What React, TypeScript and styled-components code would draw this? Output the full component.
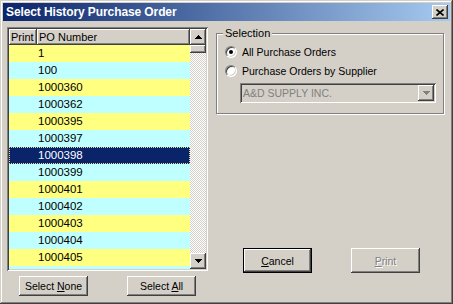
import React from "react";
import styled, { createGlobalStyle } from "styled-components";

const Global = createGlobalStyle`
  html, body { margin: 0; padding: 0; background: #d4d0c8; }
  body { font-family: "Liberation Sans", Arial, sans-serif; font-size: 11px; color: #000; }
`;

const raised = `
  box-shadow: inset -1px -1px 0 #404040, inset 1px 1px 0 #ffffff,
    inset -2px -2px 0 #808080, inset 2px 2px 0 #d4d0c8;
`;

const Window = styled.div`
  width: 453px;
  height: 304px;
  box-sizing: border-box;
  padding: 3px;
  background: #d4d0c8;
  box-shadow: inset -1px -1px 0 #404040, inset 1px 1px 0 #d4d0c8,
    inset -2px -2px 0 #808080, inset 2px 2px 0 #ffffff;
  display: flex;
  flex-direction: column;
`;

const TitleBar = styled.div`
  height: 18px;
  flex: none;
  display: flex;
  align-items: center;
  justify-content: space-between;
  padding: 0 2px 0 3px;
  background: linear-gradient(to right, #0a246a, #a6caf0);
`;

const Title = styled.span`
  color: #fff;
  font-weight: bold;
  font-size: 12px;
  letter-spacing: -0.1px;
`;

const CloseBtn = styled.div`
  width: 16px;
  height: 14px;
  background: #d4d0c8;
  ${raised}
  display: flex;
  align-items: center;
  justify-content: center;
`;

const Body = styled.div`
  flex: 1;
  display: flex;
  padding: 6px 0 0 4px;
`;

const LeftCol = styled.div`
  width: 201px;
  display: flex;
  flex-direction: column;
`;

const ListBox = styled.div`
  width: 201px;
  height: 244px;
  box-sizing: border-box;
  padding: 2px;
  background: #d4d0c8;
  box-shadow: inset 1px 1px 0 #808080, inset -1px -1px 0 #ffffff,
    inset 2px 2px 0 #404040, inset -2px -2px 0 #d4d0c8;
  display: flex;
  overflow: hidden;
`;

const Grid = styled.div`
  flex: 1;
  display: flex;
  flex-direction: column;
  overflow: hidden;
`;

const HeaderRow = styled.div`
  height: 16px;
  flex: none;
  display: grid;
  grid-template-columns: 28px 1fr;
`;

const HeaderCell = styled.div<{ $pad: number }>`
  background: #d4d0c8;
  box-shadow: inset -1px -1px 0 #404040, inset 1px 1px 0 #ffffff,
    inset -2px -2px 0 #808080;
  padding-left: ${(p) => p.$pad}px;
  line-height: 16px;
  white-space: nowrap;
  overflow: hidden;
`;

const Row = styled.div<{ $bg: string; $sel?: boolean }>`
  height: 17px;
  flex: none;
  display: grid;
  grid-template-columns: 28px 1fr;
  background: ${(p) => (p.$sel ? "#0a246a" : p.$bg)};
  color: ${(p) => (p.$sel ? "#fff" : "#000")};
  line-height: 17px;
  font-size: 11.5px;
  ${(p) => (p.$sel ? "outline: 1px dotted #f0d890; outline-offset: -1px;" : "")}
`;

const Cell = styled.div`
  padding-left: 1px;
  white-space: nowrap;
`;

const ScrollBar = styled.div`
  width: 16px;
  flex: none;
  display: flex;
  flex-direction: column;
  background-color: #ffffff;
  background-image: conic-gradient(#d4d0c8 25%, #ffffff 0 50%, #d4d0c8 0 75%, #ffffff 0);
  background-size: 2px 2px;
`;

const ScrollBtn = styled.div`
  width: 16px;
  height: 16px;
  flex: none;
  background: #d4d0c8;
  ${raised}
  display: flex;
  align-items: center;
  justify-content: center;
`;

const Thumb = styled.div`
  width: 16px;
  height: 8px;
  flex: none;
  background: #d4d0c8;
  ${raised}
`;

const Track = styled.div`
  flex: 1;
`;

const LeftButtons = styled.div`
  display: flex;
  gap: 39px;
  padding: 5px 0 0 12px;
`;

const Button = styled.div<{ $w: number; $h: number; $def?: boolean; $dis?: boolean }>`
  width: ${(p) => p.$w}px;
  height: ${(p) => p.$h}px;
  box-sizing: border-box;
  background: #d4d0c8;
  display: flex;
  align-items: center;
  justify-content: center;
  white-space: nowrap;
  font-size: 10.5px;
  color: ${(p) => (p.$dis ? "#808080" : "#000")};
  ${(p) => (p.$dis ? "text-shadow: 1px 1px 0 #ffffff;" : "")}
  box-shadow: ${(p) =>
    p.$def
      ? "inset 0 0 0 1px #000, inset -2px -2px 0 #404040, inset 2px 2px 0 #ffffff, inset -3px -3px 0 #808080"
      : "inset -1px -1px 0 #404040, inset 1px 1px 0 #ffffff, inset -2px -2px 0 #808080, inset 2px 2px 0 #d4d0c8"};
  u { text-decoration: underline; text-underline-offset: 1px; }
`;

const RightCol = styled.div`
  margin-left: 7px;
  width: 229px;
  display: flex;
  flex-direction: column;
`;

const Group = styled.div`
  position: relative;
  margin: 6px 0 0 1px;
  height: 81px;
  box-sizing: border-box;
  border: 1px solid #808080;
  box-shadow: 1px 1px 0 #ffffff, inset 1px 1px 0 #ffffff;
  display: flex;
  flex-direction: column;
  padding: 8px 0 0 8px;
`;

const Legend = styled.span`
  position: absolute;
  top: -8px;
  left: 6px;
  padding: 0 2px 0 2px;
  background: #d4d0c8;
  line-height: 14px;
`;

const RadioRow = styled.div`
  display: flex;
  align-items: center;
  height: 19px;
  gap: 5px;
  font-size: 10.5px;
`;

const Radio = styled.div<{ $on?: boolean }>`
  width: 12px;
  height: 12px;
  border-radius: 50%;
  background: #fff;
  box-sizing: border-box;
  border: 1px solid;
  border-color: #808080 #ffffff #ffffff #808080;
  box-shadow: inset 1px 1px 0 #404040, inset -1px -1px 0 #d4d0c8;
  display: flex;
  align-items: center;
  justify-content: center;
  &::after {
    content: "";
    width: 4px;
    height: 4px;
    border-radius: 50%;
    background: ${(p) => (p.$on ? "#000" : "transparent")};
  }
`;

const Combo = styled.div`
  margin: 3px 0 0 15px;
  width: 196px;
  height: 20px;
  box-sizing: border-box;
  padding: 2px;
  background: #d4d0c8;
  box-shadow: inset 1px 1px 0 #808080, inset -1px -1px 0 #ffffff,
    inset 2px 2px 0 #404040, inset -2px -2px 0 #d4d0c8;
  display: flex;
  align-items: center;
`;

const ComboText = styled.span`
  flex: 1;
  color: #808080;
  font-size: 10.5px;
  padding-left: 1px;
`;

const ComboBtn = styled.div`
  width: 16px;
  height: 16px;
  background: #d4d0c8;
  ${raised}
  display: flex;
  align-items: center;
  justify-content: center;
`;

const RightButtons = styled.div`
  display: flex;
  gap: 39px;
  margin: 134px 0 0 28px;
`;

const Arrow = ({ down, color = "#000" }: { down?: boolean; color?: string }) => (
  <svg width="7" height="4" viewBox="0 0 7 4">
    <path d={down ? "M0 0h7L3.5 4z" : "M3.5 0L7 4H0z"} fill={color} shapeRendering="crispEdges" />
  </svg>
);

const rows = [
  "1", "100", "1000360", "1000362", "1000395", "1000397", "1000398",
  "1000399", "1000401", "1000402", "1000403", "1000404", "1000405", "1000406",
];

export default function App() {
  return (
    <>
      <Global />
      <Window>
        <TitleBar>
          <Title>Select History Purchase Order</Title>
          <CloseBtn>
            <svg width="8" height="7" viewBox="0 0 8 7">
              <path d="M0.5 0.5L7.5 6.5M7.5 0.5L0.5 6.5" stroke="#000" strokeWidth="1.6" />
            </svg>
          </CloseBtn>
        </TitleBar>
        <Body>
          <LeftCol>
            <ListBox>
              <Grid>
                <HeaderRow>
                  <HeaderCell $pad={2}>Print</HeaderCell>
                  <HeaderCell $pad={2}>PO Number</HeaderCell>
                </HeaderRow>
                {rows.map((r, i) => (
                  <Row key={r} $bg={i % 2 === 0 ? "#ffff80" : "#c0ffff"} $sel={r === "1000398"}>
                    <Cell />
                    <Cell>{r}</Cell>
                  </Row>
                ))}
              </Grid>
              <ScrollBar>
                <ScrollBtn><Arrow /></ScrollBtn>
                <Thumb />
                <Track />
                <ScrollBtn><Arrow down /></ScrollBtn>
              </ScrollBar>
            </ListBox>
            <LeftButtons>
              <Button $w={69} $h={20}><span>Select <u>N</u>one</span></Button>
              <Button $w={69} $h={20}><span>Select <u>A</u>ll</span></Button>
            </LeftButtons>
          </LeftCol>
          <RightCol>
            <Group>
              <Legend>Selection</Legend>
              <RadioRow><Radio $on />All Purchase Orders</RadioRow>
              <RadioRow><Radio />Purchase Orders by Supplier</RadioRow>
              <Combo>
                <ComboText>A&amp;D SUPPLY INC.</ComboText>
                <ComboBtn><Arrow down color="#808080" /></ComboBtn>
              </Combo>
            </Group>
            <RightButtons>
              <Button $w={69} $h={25} $def><span><u>C</u>ancel</span></Button>
              <Button $w={69} $h={25} $dis><span><u>P</u>rint</span></Button>
            </RightButtons>
          </RightCol>
        </Body>
      </Window>
    </>
  );
}
